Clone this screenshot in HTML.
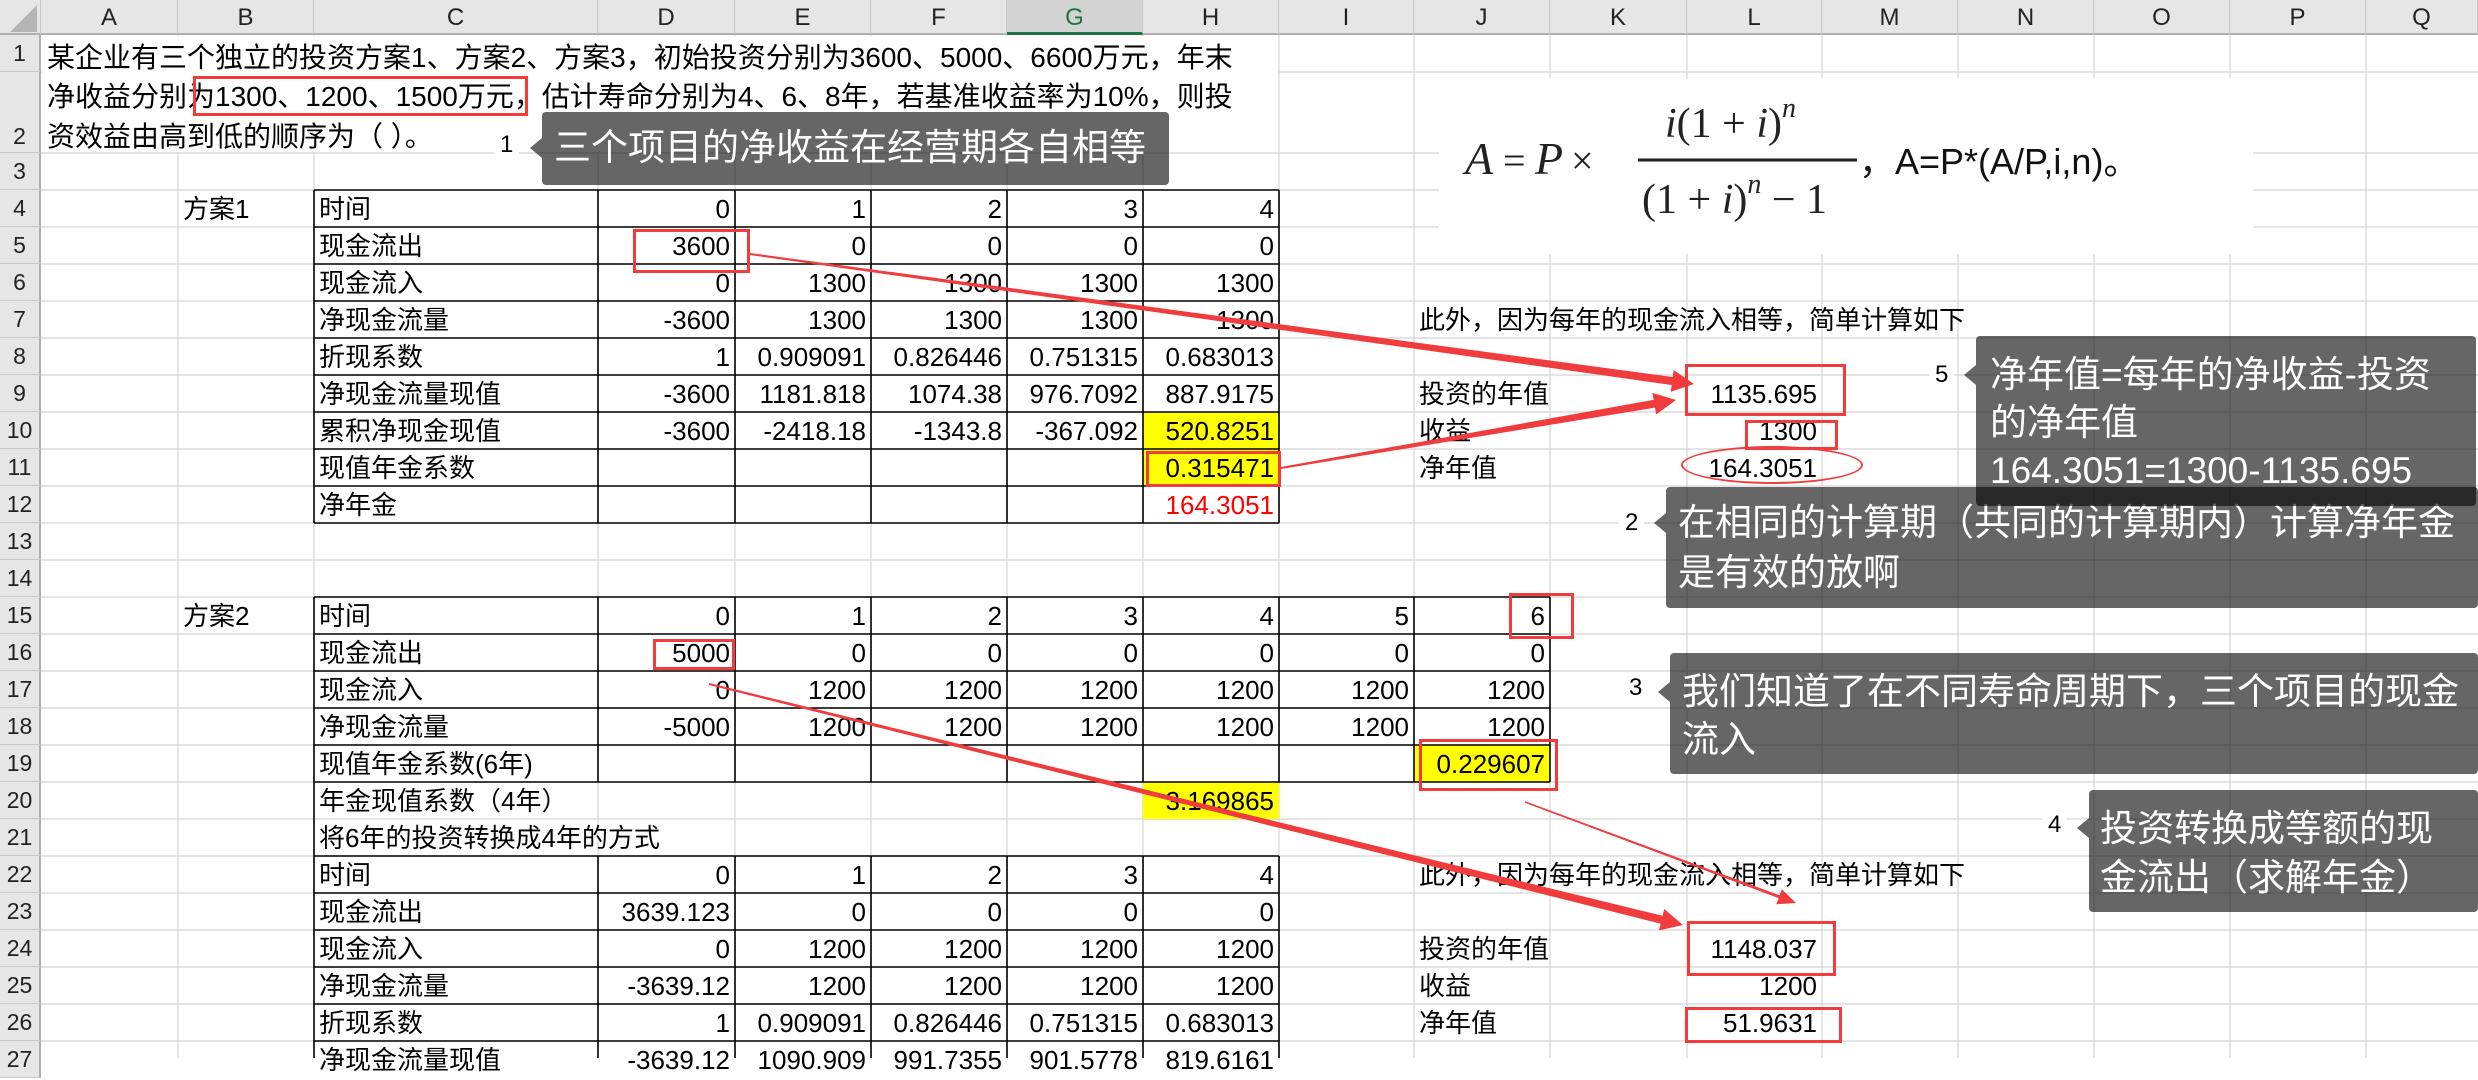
<!DOCTYPE html>
<html><head><meta charset="utf-8">
<style>
*{margin:0;padding:0;box-sizing:border-box}
body{width:2478px;height:1058px;overflow:hidden;background:#fff;font-family:"Liberation Sans","Noto Sans CJK SC",sans-serif;font-size:26px;color:#000;position:relative}
.a{position:absolute}
.hdr{position:absolute;top:0;height:35px;background:#e6e6e6;border-right:1px solid #c8c8c8;border-bottom:2px solid #b0b0b0;text-align:center;line-height:35px;font-size:24px;color:#222}
.rh{position:absolute;left:0;width:41px;background:#e6e6e6;border-bottom:1px solid #c8c8c8;border-right:2px solid #b0b0b0;text-align:center;font-size:23px;color:#222;display:flex;align-items:center;justify-content:center}
.row{position:absolute;left:314px;height:37px;display:flex;line-height:39px;white-space:nowrap}
.row div{text-align:right;padding-right:5px}
.row div:first-child{text-align:left;padding-left:5px;padding-right:0}
.c{width:284px}.d{width:137px}.e{width:136px}.i{width:135px}
.t{position:absolute;white-space:nowrap;line-height:39px;height:37px}
.call{position:absolute;background:rgba(0,0,0,0.6);color:#fff;font-size:37px;border-radius:4px;white-space:nowrap}
.call:before{content:"";position:absolute;left:-12px;top:var(--p);border-right:12px solid rgba(0,0,0,0.6);border-top:10px solid transparent;border-bottom:10px solid transparent}
.lbl{position:absolute;font-size:24px;background:#fff;padding:0 6px}
.rb{position:absolute;border:3px solid #f03c3c}
</style></head><body>

<svg class="a" style="left:0;top:0" width="2478" height="1058">
<g stroke="#d4d4d4" stroke-width="1.2">
<line x1="178" y1="35" x2="178" y2="1058"/><line x1="314" y1="35" x2="314" y2="1058"/><line x1="598" y1="35" x2="598" y2="1058"/><line x1="735" y1="35" x2="735" y2="1058"/><line x1="871" y1="35" x2="871" y2="1058"/><line x1="1007" y1="35" x2="1007" y2="1058"/><line x1="1143" y1="35" x2="1143" y2="1058"/><line x1="1279" y1="35" x2="1279" y2="1058"/><line x1="1414" y1="35" x2="1414" y2="1058"/><line x1="1550" y1="35" x2="1550" y2="1058"/><line x1="1687" y1="35" x2="1687" y2="1058"/><line x1="1822" y1="35" x2="1822" y2="1058"/><line x1="1958" y1="35" x2="1958" y2="1058"/><line x1="2094" y1="35" x2="2094" y2="1058"/><line x1="2230" y1="35" x2="2230" y2="1058"/><line x1="2366" y1="35" x2="2366" y2="1058"/>
<line x1="41" y1="72" x2="2478" y2="72"/><line x1="41" y1="153" x2="2478" y2="153"/><line x1="41" y1="190" x2="2478" y2="190"/><line x1="41" y1="227" x2="2478" y2="227"/><line x1="41" y1="264" x2="2478" y2="264"/><line x1="41" y1="301" x2="2478" y2="301"/><line x1="41" y1="338" x2="2478" y2="338"/><line x1="41" y1="375" x2="2478" y2="375"/><line x1="41" y1="412" x2="2478" y2="412"/><line x1="41" y1="449" x2="2478" y2="449"/><line x1="41" y1="486" x2="2478" y2="486"/><line x1="41" y1="523" x2="2478" y2="523"/><line x1="41" y1="560" x2="2478" y2="560"/><line x1="41" y1="597" x2="2478" y2="597"/><line x1="41" y1="634" x2="2478" y2="634"/><line x1="41" y1="671" x2="2478" y2="671"/><line x1="41" y1="708" x2="2478" y2="708"/><line x1="41" y1="745" x2="2478" y2="745"/><line x1="41" y1="782" x2="2478" y2="782"/><line x1="41" y1="819" x2="2478" y2="819"/><line x1="41" y1="856" x2="2478" y2="856"/><line x1="41" y1="893" x2="2478" y2="893"/><line x1="41" y1="930" x2="2478" y2="930"/><line x1="41" y1="967" x2="2478" y2="967"/><line x1="41" y1="1004" x2="2478" y2="1004"/><line x1="41" y1="1041" x2="2478" y2="1041"/>
</g></svg>

<div class="a" style="left:42px;top:36px;width:1236px;height:116px;background:#fff"></div>

<div class="a" style="left:1143px;top:412px;width:136px;height:74px;background:#ffff00"></div>
<div class="a" style="left:1143px;top:782px;width:136px;height:37px;background:#ffff00"></div>
<div class="a" style="left:1414px;top:745px;width:136px;height:37px;background:#ffff00"></div>

<svg class="a" style="left:0;top:0" width="2478" height="1058">
<g stroke="#000" stroke-width="1.6">
<line x1="314" y1="190" x2="314" y2="523"/><line x1="598" y1="190" x2="598" y2="523"/><line x1="735" y1="190" x2="735" y2="523"/><line x1="871" y1="190" x2="871" y2="523"/><line x1="1007" y1="190" x2="1007" y2="523"/><line x1="1143" y1="190" x2="1143" y2="523"/><line x1="1279" y1="190" x2="1279" y2="523"/>
<line x1="314" y1="190" x2="1279" y2="190"/><line x1="314" y1="227" x2="1279" y2="227"/><line x1="314" y1="264" x2="1279" y2="264"/><line x1="314" y1="301" x2="1279" y2="301"/><line x1="314" y1="338" x2="1279" y2="338"/><line x1="314" y1="375" x2="1279" y2="375"/><line x1="314" y1="412" x2="1279" y2="412"/><line x1="314" y1="449" x2="1279" y2="449"/><line x1="314" y1="486" x2="1279" y2="486"/><line x1="314" y1="523" x2="1279" y2="523"/>
<line x1="314" y1="597" x2="314" y2="856"/><line x1="598" y1="597" x2="598" y2="782"/><line x1="735" y1="597" x2="735" y2="782"/><line x1="871" y1="597" x2="871" y2="782"/><line x1="1007" y1="597" x2="1007" y2="782"/><line x1="1143" y1="597" x2="1143" y2="782"/><line x1="1279" y1="597" x2="1279" y2="782"/><line x1="1414" y1="597" x2="1414" y2="782"/><line x1="1550" y1="597" x2="1550" y2="782"/>
<line x1="314" y1="597" x2="1550" y2="597"/><line x1="314" y1="634" x2="1550" y2="634"/><line x1="314" y1="671" x2="1550" y2="671"/><line x1="314" y1="708" x2="1550" y2="708"/><line x1="314" y1="745" x2="1550" y2="745"/><line x1="314" y1="782" x2="1550" y2="782"/>
<line x1="314" y1="856" x2="314" y2="1058"/><line x1="598" y1="856" x2="598" y2="1058"/><line x1="735" y1="856" x2="735" y2="1058"/><line x1="871" y1="856" x2="871" y2="1058"/><line x1="1007" y1="856" x2="1007" y2="1058"/><line x1="1143" y1="856" x2="1143" y2="1058"/><line x1="1279" y1="856" x2="1279" y2="1058"/>
<line x1="314" y1="856" x2="1279" y2="856"/><line x1="314" y1="893" x2="1279" y2="893"/><line x1="314" y1="930" x2="1279" y2="930"/><line x1="314" y1="967" x2="1279" y2="967"/><line x1="314" y1="1004" x2="1279" y2="1004"/><line x1="314" y1="1041" x2="1279" y2="1041"/>
</g></svg>

<div class="hdr" style="left:0;width:41px"><svg width="36" height="33" style="position:absolute;left:3px;top:1px"><polygon points="34,4 34,31 7,31" fill="#b5b5b5"/></svg></div>
<div class="hdr" style="left:41px;width:137px">A</div>
<div class="hdr" style="left:178px;width:136px">B</div>
<div class="hdr" style="left:314px;width:284px">C</div>
<div class="hdr" style="left:598px;width:137px">D</div>
<div class="hdr" style="left:735px;width:136px">E</div>
<div class="hdr" style="left:871px;width:136px">F</div>
<div class="hdr" style="left:1007px;width:136px;background:#d3d3d3;border-bottom:3px solid #217346;color:#217346">G</div>
<div class="hdr" style="left:1143px;width:136px">H</div>
<div class="hdr" style="left:1279px;width:135px">I</div>
<div class="hdr" style="left:1414px;width:136px">J</div>
<div class="hdr" style="left:1550px;width:137px">K</div>
<div class="hdr" style="left:1687px;width:135px">L</div>
<div class="hdr" style="left:1822px;width:136px">M</div>
<div class="hdr" style="left:1958px;width:136px">N</div>
<div class="hdr" style="left:2094px;width:136px">O</div>
<div class="hdr" style="left:2230px;width:136px">P</div>
<div class="hdr" style="left:2366px;width:112px">Q</div>

<div class="rh" style="top:35px;height:37px">1</div>
<div class="rh" style="top:72px;height:81px;align-items:flex-end;padding-bottom:2px">2</div>
<div class="rh" style="top:153px;height:37px">3</div>
<div class="rh" style="top:190px;height:37px">4</div>
<div class="rh" style="top:227px;height:37px">5</div>
<div class="rh" style="top:264px;height:37px">6</div>
<div class="rh" style="top:301px;height:37px">7</div>
<div class="rh" style="top:338px;height:37px">8</div>
<div class="rh" style="top:375px;height:37px">9</div>
<div class="rh" style="top:412px;height:37px">10</div>
<div class="rh" style="top:449px;height:37px">11</div>
<div class="rh" style="top:486px;height:37px">12</div>
<div class="rh" style="top:523px;height:37px">13</div>
<div class="rh" style="top:560px;height:37px">14</div>
<div class="rh" style="top:597px;height:37px">15</div>
<div class="rh" style="top:634px;height:37px">16</div>
<div class="rh" style="top:671px;height:37px">17</div>
<div class="rh" style="top:708px;height:37px">18</div>
<div class="rh" style="top:745px;height:37px">19</div>
<div class="rh" style="top:782px;height:37px">20</div>
<div class="rh" style="top:819px;height:37px">21</div>
<div class="rh" style="top:856px;height:37px">22</div>
<div class="rh" style="top:893px;height:37px">23</div>
<div class="rh" style="top:930px;height:37px">24</div>
<div class="rh" style="top:967px;height:37px">25</div>
<div class="rh" style="top:1004px;height:37px">26</div>
<div class="rh" style="top:1041px;height:37px">27</div>

<div class="t" style="left:47px;top:38px;font-size:28px">某企业有三个独立的投资方案1、方案2、方案3，初始投资分别为3600、5000、6600万元，年末</div>
<div class="t" style="left:47px;top:77px;font-size:28px">净收益分别为1300、1200、1500万元，估计寿命分别为4、6、8年，若基准收益率为10%，则投</div>
<div class="t" style="left:47px;top:117px;font-size:28px">资效益由高到低的顺序为（ ）。</div>

<svg class="a" style="left:1439px;top:79px" width="814" height="175">
<rect width="814" height="175" fill="#fff"/>
<g font-family="Liberation Serif, serif" font-style="italic" fill="#222">
<text x="26" y="95" font-size="46">A</text>
<text x="64" y="95" font-size="40" font-style="normal">=</text>
<text x="96" y="95" font-size="46">P</text>
<text x="132" y="95" font-size="40" font-style="normal">×</text>
<text x="226" y="58" font-size="42">i<tspan font-style="normal">(1 + </tspan>i<tspan font-style="normal">)</tspan><tspan font-size="28" dy="-20">n</tspan></text>
<line x1="199" y1="81" x2="418" y2="81" stroke="#222" stroke-width="3"/>
<text x="203" y="134" font-size="42" font-style="normal">(1 + <tspan font-style="italic">i</tspan>)<tspan font-size="28" font-style="italic" dy="-20">n</tspan><tspan dy="20"> − 1</tspan></text>
</g>
<text x="420" y="95" font-size="36" font-family="Liberation Sans,Noto Sans CJK SC,sans-serif" fill="#111">，A=P*(A/P,i,n)。</text>
</svg>

<div class="t" style="left:183px;top:190px">方案1</div>
<div class="t" style="left:183px;top:597px">方案2</div>

<div class="row" style="top:190px"><div class="c">时间</div><div class="d">0</div><div class="e">1</div><div class="e">2</div><div class="e">3</div><div class="e">4</div></div>
<div class="row" style="top:227px"><div class="c">现金流出</div><div class="d">3600</div><div class="e">0</div><div class="e">0</div><div class="e">0</div><div class="e">0</div></div>
<div class="row" style="top:264px"><div class="c">现金流入</div><div class="d">0</div><div class="e">1300</div><div class="e">1300</div><div class="e">1300</div><div class="e">1300</div></div>
<div class="row" style="top:301px"><div class="c">净现金流量</div><div class="d">-3600</div><div class="e">1300</div><div class="e">1300</div><div class="e">1300</div><div class="e">1300</div></div>
<div class="row" style="top:338px"><div class="c">折现系数</div><div class="d">1</div><div class="e">0.909091</div><div class="e">0.826446</div><div class="e">0.751315</div><div class="e">0.683013</div></div>
<div class="row" style="top:375px"><div class="c">净现金流量现值</div><div class="d">-3600</div><div class="e">1181.818</div><div class="e">1074.38</div><div class="e">976.7092</div><div class="e">887.9175</div></div>
<div class="row" style="top:412px"><div class="c">累积净现金现值</div><div class="d">-3600</div><div class="e">-2418.18</div><div class="e">-1343.8</div><div class="e">-367.092</div><div class="e">520.8251</div></div>
<div class="row" style="top:449px"><div class="c">现值年金系数</div><div class="d"></div><div class="e"></div><div class="e"></div><div class="e"></div><div class="e">0.315471</div></div>
<div class="row" style="top:486px"><div class="c">净年金</div><div class="d"></div><div class="e"></div><div class="e"></div><div class="e"></div><div class="e" style="color:#ff0000">164.3051</div></div>

<div class="row" style="top:597px"><div class="c">时间</div><div class="d">0</div><div class="e">1</div><div class="e">2</div><div class="e">3</div><div class="e">4</div><div class="i">5</div><div class="e">6</div></div>
<div class="row" style="top:634px"><div class="c">现金流出</div><div class="d">5000</div><div class="e">0</div><div class="e">0</div><div class="e">0</div><div class="e">0</div><div class="i">0</div><div class="e">0</div></div>
<div class="row" style="top:671px"><div class="c">现金流入</div><div class="d">0</div><div class="e">1200</div><div class="e">1200</div><div class="e">1200</div><div class="e">1200</div><div class="i">1200</div><div class="e">1200</div></div>
<div class="row" style="top:708px"><div class="c">净现金流量</div><div class="d">-5000</div><div class="e">1200</div><div class="e">1200</div><div class="e">1200</div><div class="e">1200</div><div class="i">1200</div><div class="e">1200</div></div>
<div class="row" style="top:745px"><div class="c">现值年金系数(6年)</div><div class="d"></div><div class="e"></div><div class="e"></div><div class="e"></div><div class="e"></div><div class="i"></div><div class="e">0.229607</div></div>
<div class="row" style="top:782px"><div class="c">年金现值系数（4年）</div><div class="d"></div><div class="e"></div><div class="e"></div><div class="e"></div><div class="e">3.169865</div></div>
<div class="t" style="left:319px;top:819px">将6年的投资转换成4年的方式</div>

<div class="row" style="top:856px"><div class="c">时间</div><div class="d">0</div><div class="e">1</div><div class="e">2</div><div class="e">3</div><div class="e">4</div></div>
<div class="row" style="top:893px"><div class="c">现金流出</div><div class="d">3639.123</div><div class="e">0</div><div class="e">0</div><div class="e">0</div><div class="e">0</div></div>
<div class="row" style="top:930px"><div class="c">现金流入</div><div class="d">0</div><div class="e">1200</div><div class="e">1200</div><div class="e">1200</div><div class="e">1200</div></div>
<div class="row" style="top:967px"><div class="c">净现金流量</div><div class="d">-3639.12</div><div class="e">1200</div><div class="e">1200</div><div class="e">1200</div><div class="e">1200</div></div>
<div class="row" style="top:1004px"><div class="c">折现系数</div><div class="d">1</div><div class="e">0.909091</div><div class="e">0.826446</div><div class="e">0.751315</div><div class="e">0.683013</div></div>
<div class="row" style="top:1041px"><div class="c">净现金流量现值</div><div class="d">-3639.12</div><div class="e">1090.909</div><div class="e">991.7355</div><div class="e">901.5778</div><div class="e">819.6161</div></div>

<div class="t" style="left:1419px;top:301px">此外，因为每年的现金流入相等，简单计算如下</div>
<div class="t" style="left:1419px;top:375px">投资的年值</div>
<div class="t" style="left:1687px;top:375px;width:130px;text-align:right">1135.695</div>
<div class="t" style="left:1419px;top:412px">收益</div>
<div class="t" style="left:1687px;top:412px;width:130px;text-align:right">1300</div>
<div class="t" style="left:1419px;top:449px">净年值</div>
<div class="t" style="left:1687px;top:449px;width:130px;text-align:right">164.3051</div>
<div class="t" style="left:1419px;top:856px">此外，因为每年的现金流入相等，简单计算如下</div>
<div class="t" style="left:1419px;top:930px">投资的年值</div>
<div class="t" style="left:1687px;top:930px;width:130px;text-align:right">1148.037</div>
<div class="t" style="left:1419px;top:967px">收益</div>
<div class="t" style="left:1687px;top:967px;width:130px;text-align:right">1200</div>
<div class="t" style="left:1419px;top:1004px">净年值</div>
<div class="t" style="left:1687px;top:1004px;width:130px;text-align:right">51.9631</div>

<div class="rb" style="left:193px;top:76px;width:335px;height:40px"></div>
<div class="rb" style="left:633px;top:229px;width:117px;height:44px"></div>
<div class="rb" style="left:1146px;top:451px;width:135px;height:36px"></div>
<div class="rb" style="left:1685px;top:364px;width:161px;height:52px"></div>
<div class="rb" style="left:1745px;top:420px;width:93px;height:30px"></div>
<div class="a" style="left:1681px;top:446px;width:182px;height:38px;border:2.5px solid #f03c3c;border-radius:50%"></div>
<div class="rb" style="left:653px;top:639px;width:82px;height:31px"></div>
<div class="rb" style="left:1509px;top:593px;width:65px;height:46px"></div>
<div class="rb" style="left:1419px;top:739px;width:139px;height:52px"></div>
<div class="rb" style="left:1687px;top:921px;width:149px;height:55px"></div>
<div class="rb" style="left:1685px;top:1007px;width:157px;height:36px"></div>

<svg class="a" style="left:0;top:0" width="2478" height="1058">
<g fill="#f03c3c">
<polygon points="750,253 1672.7,377 1673.7,370.1 1694,384 1670.7,391.9 1671.7,385 750,255"/>
<polygon points="1280.9,467 1653.6,399.8 1652.4,392.9 1676,400 1656.2,414.5 1655,407.6 1281.1,469"/>
<polygon points="709.1,683 1662.6,915.8 1664.2,909 1683,925 1659,930.4 1660.6,923.6 708.9,685"/>
<polygon points="1525.2,801.3 1779.6,895.3 1781.9,889.2 1796,903 1776.3,904.2 1778.6,898.1 1524.8,802.7"/>
</g></svg>

<div class="lbl" style="left:494px;top:131px">1</div>
<div class="call" style="--p:26px;left:542px;top:112px;width:627px;height:73px;padding:8px 0 0 12px;line-height:56px">三个项目的净收益在经营期各自相等</div>
<div class="lbl" style="left:1619px;top:509px">2</div>
<div class="call" style="--p:26px;left:1666px;top:487px;width:812px;height:121px;padding:11px 0 0 12px;line-height:50px">在相同的计算期（共同的计算期内）计算净年金<br>是有效的放啊</div>
<div class="lbl" style="left:1623px;top:674px">3</div>
<div class="call" style="--p:29px;left:1670px;top:653px;width:808px;height:121px;padding:15px 0 0 12px;line-height:48px">我们知道了在不同寿命周期下，三个项目的现金<br>流入</div>
<div class="lbl" style="left:2042px;top:811px">4</div>
<div class="call" style="--p:28px;left:2089px;top:790px;width:389px;height:122px;padding:14px 0 0 11px;line-height:49px">投资转换成等额的现<br>金流出（求解年金）</div>
<div class="lbl" style="left:1929px;top:361px">5</div>
<div class="call" style="--p:29px;left:1976px;top:336px;width:500px;height:170px;padding:15px 0 0 14px;line-height:48px">净年值=每年的净收益-投资<br>的净年值<br>164.3051=1300-1135.695</div>

</body></html>
